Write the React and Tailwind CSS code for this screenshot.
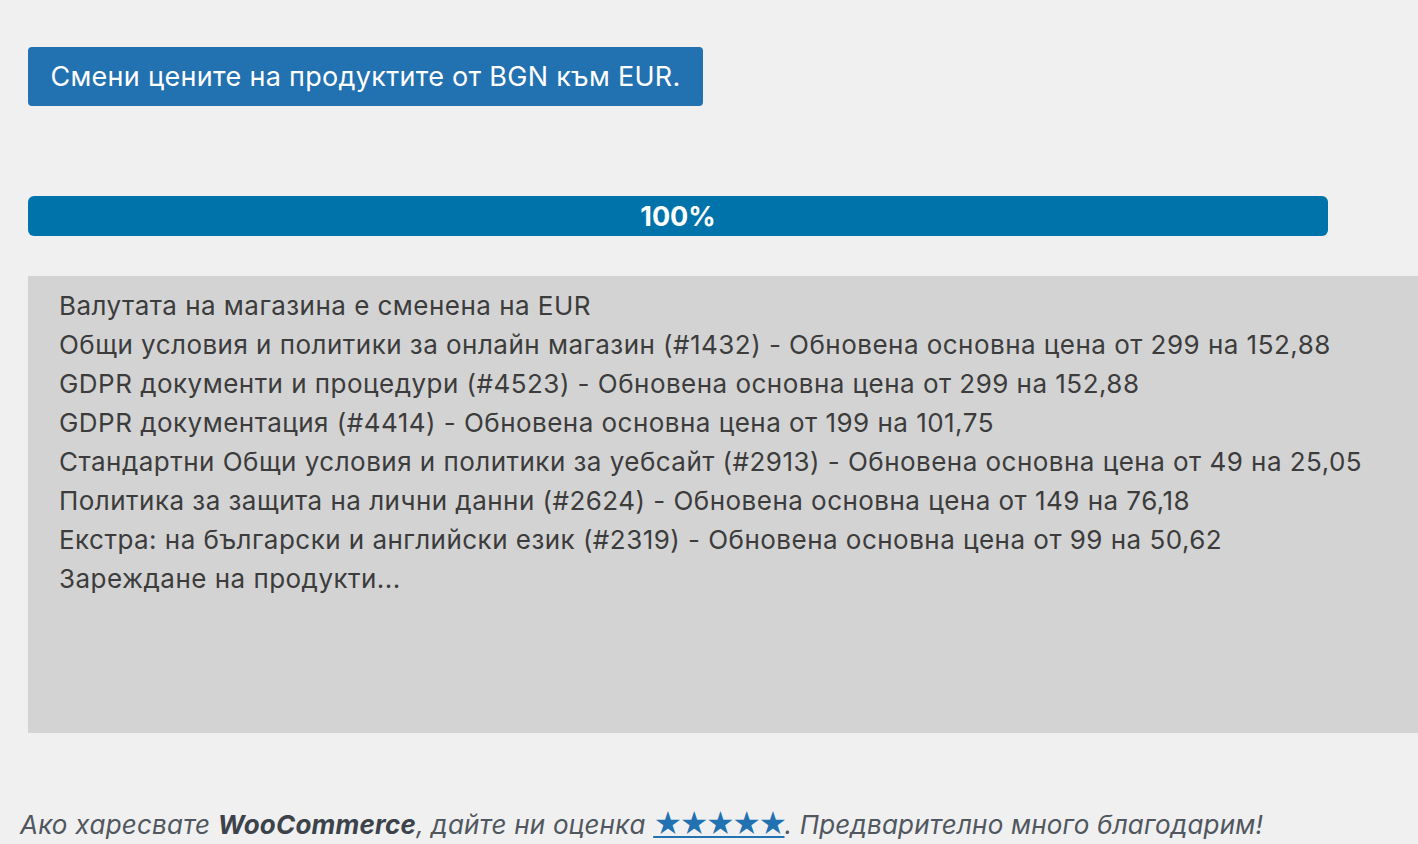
import React from "react";

const logLines = [
  "Валутата на магазина е сменена на EUR",
  "Общи условия и политики за онлайн магазин (#1432) - Обновена основна цена от 299 на 152,88",
  "GDPR документи и процедури (#4523) - Обновена основна цена от 299 на 152,88",
  "GDPR документация (#4414) - Обновена основна цена от 199 на 101,75",
  "Стандартни Общи условия и политики за уебсайт (#2913) - Обновена основна цена от 49 на 25,05",
  "Политика за защита на лични данни (#2624) - Обновена основна цена от 149 на 76,18",
  "Екстра: на български и английски език (#2319) - Обновена основна цена от 99 на 50,62",
  "Зареждане на продукти...",
];

const App = () => {
  return (
    <div
      lang="bg"
      className="min-h-screen bg-[#f0f0f1] overflow-hidden font-['Inter',_'Liberation_Sans',_sans-serif]"
    >
      <div className="pl-[28px] pt-[47px]">
        <button
          type="button"
          className="h-[59px] w-[675px] rounded-[4px] bg-[#2271b1] text-white text-[27px] tracking-[0.3px] leading-none"
        >
          Смени цените на продуктите от BGN към EUR.
        </button>

        <div className="mt-[90px] w-[1300px] h-[40px] rounded-[6px] bg-[#0073aa] flex items-center justify-center">
          <span className="text-white font-bold text-[27px] leading-none">100%</span>
        </div>

        <div className="mt-[40px] h-[457px] bg-[#d3d3d3] pl-[31px] pt-[10px] text-[#3c3c3c] text-[26px] tracking-[0.47px] leading-[39px]">
          {logLines.map((line) => (
            <div key={line} className="whitespace-nowrap">{line}</div>
          ))}
        </div>
      </div>

      <p className="mt-[70px] pl-[20px] italic text-[26px] tracking-[0.2px] text-[#50575e] whitespace-nowrap">
        Ако харесвате <strong className="text-[#3c434a]">WooCommerce</strong>, дайте ни оценка{" "}
        <a href="#" className="text-[#2271b1] underline not-italic text-[28px] tracking-[-3px]">★★★★★</a>. Предварително много благодарим!
      </p>
    </div>
  );
};

export default App;
